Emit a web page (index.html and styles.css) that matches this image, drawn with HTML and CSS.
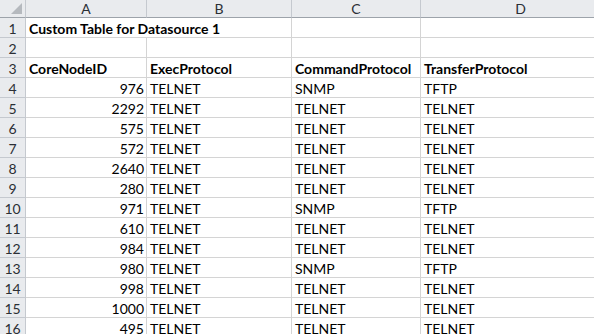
FILE: index.html
```html
<!DOCTYPE html>
<html lang="en">
<head>
<meta charset="utf-8"/>
<title>Custom Table for Datasource 1</title>
<link rel="stylesheet" href="styles.css">
</head>
<body>
<div class="sheet" id="sheet">
  <div class="corner"><span class="select-all"></span></div>
  <div class="colhead">A</div>
  <div class="colhead">B</div>
  <div class="colhead">C</div>
  <div class="colhead">D</div>

  <div class="rowhead">1</div>
  <div class="cell bold span2">Custom Table for Datasource 1</div>
  <div class="cell"></div>
  <div class="cell"></div>

  <div class="rowhead">2</div>
  <div class="cell"></div>
  <div class="cell"></div>
  <div class="cell"></div>
  <div class="cell"></div>

  <div class="rowhead">3</div>
  <div class="cell bold">CoreNodeID</div>
  <div class="cell bold">ExecProtocol</div>
  <div class="cell bold">CommandProtocol</div>
  <div class="cell bold">TransferProtocol</div>
</div>
<script>
  // rows 4..16 of the sheet
  const linhas = [
    [976, "TELNET", "SNMP", "TFTP"],
    [2292, "TELNET", "TELNET", "TELNET"],
    [575, "TELNET", "TELNET", "TELNET"],
    [572, "TELNET", "TELNET", "TELNET"],
    [2640, "TELNET", "TELNET", "TELNET"],
    [280, "TELNET", "TELNET", "TELNET"],
    [971, "TELNET", "SNMP", "TFTP"],
    [610, "TELNET", "TELNET", "TELNET"],
    [984, "TELNET", "TELNET", "TELNET"],
    [980, "TELNET", "SNMP", "TFTP"],
    [998, "TELNET", "TELNET", "TELNET"],
    [1000, "TELNET", "TELNET", "TELNET"],
    [495, "TELNET", "TELNET", "TELNET"]
  ];
  const sheet = document.getElementById("sheet");
  linhas.forEach((linha, i) => {
    let html = `<div class="rowhead">${i + 4}</div>`;
    html += `<div class="cell num">${linha[0]}</div>`;
    for (let c = 1; c < 4; c++) {
      html += `<div class="cell">${linha[c]}</div>`;
    }
    sheet.insertAdjacentHTML("beforeend", html);
  });
</script>
</body>
</html>
```
FILE: styles.css
```css
body {
  margin: 0;
  background: #fff;
  font-family: 'Lato', 'Liberation Sans', sans-serif;
  font-size: 14px;
  color: #000;
  overflow: hidden;
}
.sheet {
  display: grid;
  grid-template-columns: 26px 121px 145px 129px 200px;
  grid-template-rows: 18px;
  grid-auto-rows: 20px;
  width: 621px;
}
.sheet > div {
  box-sizing: border-box;
  white-space: nowrap;
  overflow: hidden;
}
.corner {
  position: relative;
  background: #e9ebee;
  border-right: 1px solid #c5c9cf;
  border-bottom: 1px solid #9da3aa;
}
.select-all {
  position: absolute;
  right: 3px;
  bottom: 3px;
  width: 0;
  height: 0;
  border-left: 11px solid transparent;
  border-bottom: 11px solid #b5b9be;
}
.colhead {
  background: #e9ebee;
  border-right: 1px solid #c5c9cf;
  border-bottom: 1px solid #9da3aa;
  text-align: center;
  font-size: 14px;
  line-height: 17px;
  color: #2b2f35;
}
.rowhead {
  background: #e9ebee;
  border-right: 1px solid #c5c9cf;
  border-bottom: 1px solid #c5c9cf;
  text-align: center;
  font-size: 14px;
  line-height: 21px;
  color: #2b2f35;
}
.cell {
  border-right: 1px solid #d4d4d4;
  border-bottom: 1px solid #d4d4d4;
  padding: 0 2px 0 3px;
  line-height: 21px;
}
.span2 {
  grid-column: span 2;
}
.bold {
  font-weight: bold;
}
.num {
  text-align: right;
}
```
